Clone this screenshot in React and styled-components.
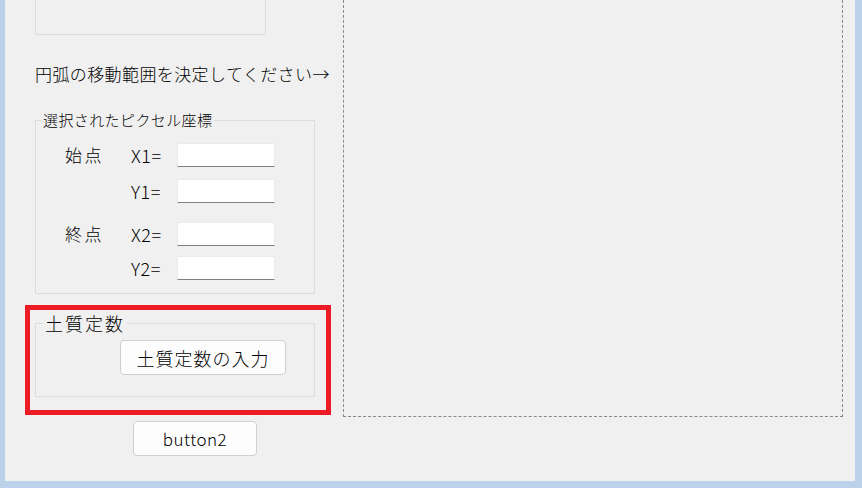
import React from "react";
import styled, { createGlobalStyle } from "styled-components";

const Global = createGlobalStyle`
  html, body { margin: 0; padding: 0; }
  body {
    background: #bcd2eb;
    font-family: "Noto Sans CJK JP", "Noto Sans", sans-serif;
    font-weight: 300;
    color: #000;
  }
`;

const Frame = styled.div`
  width: 862px;
  height: 488px;
  box-sizing: border-box;
  background: #bcd2eb;
  padding: 0 7px 7px 5px;
`;

const Client = styled.div`
  height: 100%;
  background: #f0f0f0;
  display: flex;
  align-items: flex-start;
`;

const LeftColumn = styled.div`
  width: 338px;
  flex: none;
  box-sizing: border-box;
  padding-left: 20px;
  display: flex;
  flex-direction: column;
  align-items: flex-start;
`;

const ClippedBox = styled.div`
  margin-left: 10px;
  width: 231px;
  height: 35px;
  box-sizing: border-box;
  border: 1px solid #dcdcdc;
  border-top: none;
`;

const Prompt = styled.div`
  margin: 29px 0 0 10px;
  font-size: 17px;
  line-height: 20px;
  letter-spacing: 0.4px;
  white-space: nowrap;
`;

const Group = styled.fieldset`
  margin: ${(p) => p.$mt || 0}px 0 0 ${(p) => p.$ml || 0}px;
  padding: 0;
  width: 280px;
  height: ${(p) => p.$h}px;
  box-sizing: border-box;
  border: 1px solid #dcdcdc;
  min-width: 0;
`;

const Legend = styled.legend`
  margin-left: ${(p) => p.$ml}px;
  padding: 0 2px;
  font-size: ${(p) => p.$fs}px;
  line-height: ${(p) => p.$lh}px;
  letter-spacing: ${(p) => p.$ls}px;
  white-space: nowrap;
`;

const CoordGrid = styled.div`
  display: grid;
  grid-template-columns: 66px 46px 98px;
  align-items: center;
  padding-left: 29px;
  margin-top: ${(p) => p.$mt}px;
  row-gap: ${(p) => p.$gap}px;
`;

const PointName = styled.span`
  font-size: 17px;
  line-height: 20px;
  letter-spacing: 2.5px;
  white-space: nowrap;
`;

const AxisLabel = styled.span`
  font-size: 18px;
  line-height: 20px;
  letter-spacing: 0.5px;
  white-space: nowrap;
  grid-column: 2;
`;

const TextBox = styled.input`
  grid-column: 3;
  width: 98px;
  height: 24px;
  box-sizing: border-box;
  margin: 0;
  padding: 0 4px;
  background: #fff;
  border: 1px solid #ebebeb;
  border-bottom: 1px solid #808080;
  border-radius: 1px;
  outline: none;
  font: inherit;
`;

const RedFrame = styled.div`
  margin-top: 11px;
  width: 306px;
  height: 110px;
  box-sizing: border-box;
  border: 5px solid #ed1c24;
  padding-top: 3px;
`;

const Button = styled.button`
  width: ${(p) => p.$w}px;
  height: 35px;
  margin: ${(p) => p.$mt}px 0 0 ${(p) => p.$ml}px;
  padding: 0;
  box-sizing: border-box;
  background: #fdfdfd;
  border: 1px solid #cfcfcf;
  border-radius: 4px;
  font-family: "Noto Sans CJK JP", "Noto Sans", sans-serif;
  font-weight: 300;
  font-size: ${(p) => p.$fs}px;
  letter-spacing: ${(p) => p.$ls || 0}px;
  color: #000;
  display: block;
`;

const Canvas = styled.div`
  width: 500px;
  height: 417px;
  box-sizing: border-box;
  border: 1px dashed #8a8a8a;
  border-top: none;
  flex: none;
`;

function PointBlock({ name, rows, mt, gap }) {
  return (
    <CoordGrid $mt={mt} $gap={gap}>
      {rows.map((r, i) => (
        <React.Fragment key={r}>
          {i === 0 ? <PointName>{name}</PointName> : <span />}
          <AxisLabel>{r}=</AxisLabel>
          <TextBox type="text" />
        </React.Fragment>
      ))}
    </CoordGrid>
  );
}

export default function App() {
  return (
    <>
      <Global />
      <Frame>
        <Client>
          <LeftColumn>
            <ClippedBox />
            <Prompt>円弧の移動範囲を決定してください→</Prompt>
            <Group $mt={27} $ml={10} $h={183}>
              <Legend $ml={5} $fs={15} $lh={18} $ls={0.4}>選択されたピクセル座標</Legend>
              <PointBlock name="始点" rows={["X1", "Y1"]} mt={14} gap={12} />
              <PointBlock name="終点" rows={["X2", "Y2"]} mt={19} gap={10} />
            </Group>
            <RedFrame>
              <Group $ml={5} $h={84}>
                <Legend $ml={7} $fs={18} $lh={20} $ls={2}>土質定数</Legend>
                <Button $w={166} $mt={7} $ml={84} $fs={18} $ls={1}>
                  土質定数の入力
                </Button>
              </Group>
            </RedFrame>
            <Button $w={124} $mt={6} $ml={108} $fs={17} $ls={0.5}>
              button2
            </Button>
          </LeftColumn>
          <Canvas />
        </Client>
      </Frame>
    </>
  );
}
